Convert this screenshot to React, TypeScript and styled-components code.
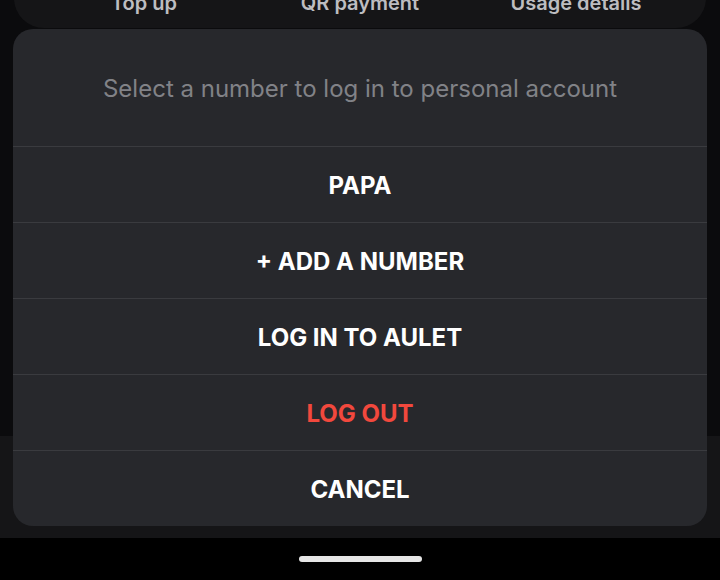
import React from "react";
import styled, { createGlobalStyle } from "styled-components";

const Global = createGlobalStyle`
  html, body { margin: 0; padding: 0; background: #0b0b0d; }
  body { font-family: Inter, "Noto Sans", sans-serif; -webkit-font-smoothing: antialiased; }
`;

const Screen = styled.div`
  width: 720px;
  height: 580px;
  background: #0b0b0d;
  display: flex;
  flex-direction: column;
  position: relative;
  overflow: hidden;
`;

const Backdrop = styled.div`
  flex: 1;
  display: flex;
  flex-direction: column;
`;

const TopCard = styled.div`
  margin: -20px 14px 0 14px;
  height: 48px;
  padding: 0 22px;
  background: #151517;
  border-radius: 0 0 30px 30px;
  display: grid;
  grid-template-columns: repeat(3, 1fr);
  align-items: start;
`;

const ActionLabel = styled.span`
  text-align: center;
  color: #bdbdc0;
  font-size: 20px;
  font-weight: 600;
  line-height: 24px;
  padding-top: 11px;
  white-space: nowrap;
`;

const Spacer = styled.div`
  flex: 1;
`;

const BottomBand = styled.div`
  height: 102px;
  background: #151517;
`;

const NavBar = styled.div`
  height: 42px;
  background: #000;
  display: flex;
  justify-content: center;
  align-items: center;
`;

const HomeIndicator = styled.div`
  width: 123px;
  height: 6px;
  border-radius: 3px;
  background: #e6e6e6;
`;

const Sheet = styled.div`
  position: absolute;
  left: 13px;
  top: 29px;
  width: 694px;
  background: #27282c;
  border-radius: 20px;
  display: flex;
  flex-direction: column;
  overflow: hidden;
`;

const Header = styled.div`
  height: 117px;
  padding-top: 1px;
  box-sizing: border-box;
  display: flex;
  align-items: center;
  justify-content: center;
  color: #818287;
  font-size: 24px;
  font-weight: 400;
`;

const Item = styled.div<{ $danger?: boolean }>`
  height: 76px;
  padding-top: 2px;
  box-sizing: border-box;
  border-top: 1px solid #3a3b3f;
  display: flex;
  align-items: center;
  justify-content: center;
  color: ${(p) => (p.$danger ? "#f2483d" : "#ffffff")};
  font-size: 24px;
  font-weight: 700;
  text-transform: uppercase;
`;

const items: { label: string; danger?: boolean }[] = [
  { label: "PAPA" },
  { label: "+ ADD A NUMBER" },
  { label: "LOG IN TO AULET" },
  { label: "LOG OUT", danger: true },
  { label: "CANCEL" },
];

export default function App() {
  return (
    <>
      <Global />
      <Screen>
        <Backdrop>
          <TopCard>
            <ActionLabel>Top up</ActionLabel>
            <ActionLabel>QR payment</ActionLabel>
            <ActionLabel>Usage details</ActionLabel>
          </TopCard>
          <Spacer />
          <BottomBand />
        </Backdrop>
        <NavBar>
          <HomeIndicator />
        </NavBar>
        <Sheet>
          <Header>Select a number to log in to personal account</Header>
          {items.map((it) => (
            <Item key={it.label} $danger={it.danger}>
              {it.label}
            </Item>
          ))}
        </Sheet>
      </Screen>
    </>
  );
}
